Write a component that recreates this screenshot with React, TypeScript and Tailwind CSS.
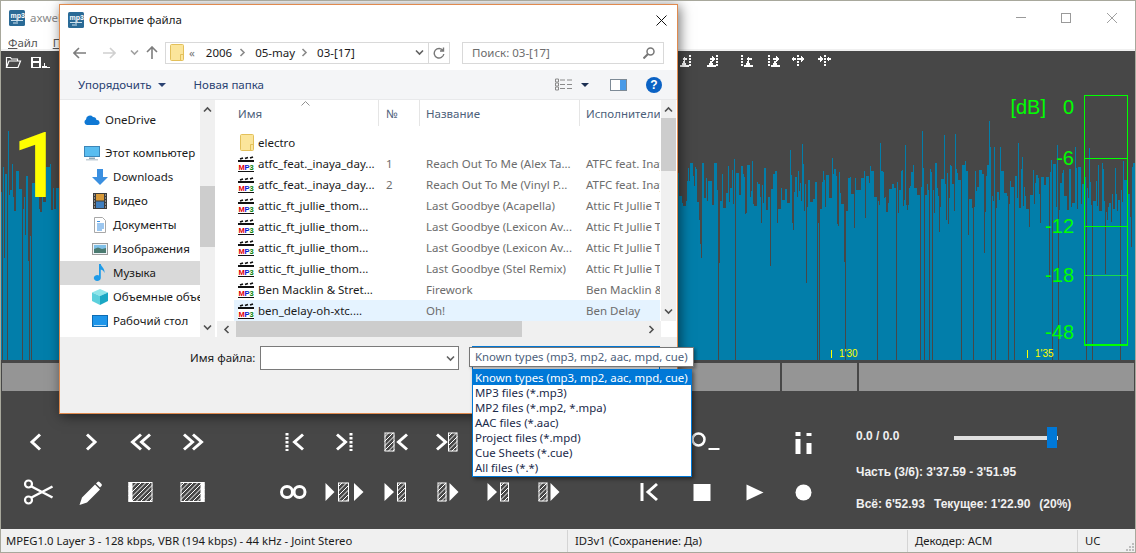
import type { ReactNode } from 'react';

// deterministic waveform so that every render gives the same picture
function buildWave() {
  let seed = 4711;
  const rnd = () => {
    seed = (seed * 1664525 + 1013904223) % 4294967296;
    return seed / 4294967296;
  };
  const blue: string[] = [];
  const H = 309;
  let x = 0;
  while (x < 1136) {
    let w = rnd() < 0.5 ? 1 : rnd() < 0.6 ? 2 : 3;
    let top = 112 + rnd() * 50;
    const k = rnd();
    if (k < 0.16) {
      top -= rnd() * 50;
      w = 1;
    } else if (k < 0.3) {
      top = 150 + rnd() * rnd() * 105;
      w = 1;
    }
    blue.push(`M${x} ${top.toFixed(0)}h${w}V${H}h-${w}z`);
    x += w;
    if (rnd() < 0.06) x += 1;
  }
  return blue.join('');
}
const wavePath = buildWave();

const files = [
  { name: 'atfc_feat._inaya_day...', n: '1', title: 'Reach Out To Me (Alex Ta...', artist: 'ATFC feat. Inaya' },
  { name: 'atfc_feat._inaya_day...', n: '2', title: 'Reach Out To Me (Vinyl P...', artist: 'ATFC feat. Inaya' },
  { name: 'attic_ft_jullie_thom...', n: '', title: 'Last Goodbye (Acapella)', artist: 'Attic Ft Jullie Th' },
  { name: 'attic_ft_jullie_thom...', n: '', title: 'Last Goodbye (Lexicon Av...', artist: 'Attic Ft Jullie Th' },
  { name: 'attic_ft_jullie_thom...', n: '', title: 'Last Goodbye (Lexicon Av...', artist: 'Attic Ft Jullie Th' },
  { name: 'attic_ft_jullie_thom...', n: '', title: 'Last Goodbye (Stel Remix)', artist: 'Attic Ft Jullie Th' },
  { name: 'Ben Macklin & Stret...', n: '', title: 'Firework', artist: 'Ben Macklin & St' },
  { name: 'ben_delay-oh-xtc....', n: '', title: 'Oh!', artist: 'Ben Delay' },
];

const fileTypes = [
  'Known types (mp3, mp2, aac, mpd, cue)',
  'MP3 files (*.mp3)',
  'MP2 files (*.mp2, *.mpa)',
  'AAC files (*.aac)',
  'Project files (*.mpd)',
  'Cue Sheets (*.cue)',
  'All files (*.*)',
];

function Logo() {
  return (
    <svg width="16" height="16" viewBox="0 0 16 16" className="shrink-0">
      <rect width="16" height="16" rx="1.5" fill="#2a6a96" />
      <text x="1.5" y="7.5" fontSize="7" fontWeight="bold" fill="#fff" fontFamily="Liberation Sans">mp3</text>
      <path d="M2 10.5h12M8 8v6M4 13h3" stroke="#cfe2ee" strokeWidth="1" fill="none" />
    </svg>
  );
}

function Mp3Icon() {
  return (
    <svg width="16" height="16" viewBox="0 0 16 16" className="shrink-0">
      <rect x="0" y="6" width="16" height="9" fill="#fff" />
      <path d="M0 4h16v2H0zM0 15h16v1H0z" fill="#111" />
      <path d="M2 3l3-1M7 2.500l3-1M12 2l3-1" stroke="#111" strokeWidth="1.800" />
      <text x="0.500" y="13.500" fontSize="7.500" fontWeight="bold" fill="#e00000" fontFamily="Liberation Sans">M</text>
      <text x="6.500" y="13.500" fontSize="7.500" fontWeight="bold" fill="#0020d0" fontFamily="Liberation Sans">P</text>
      <text x="11.500" y="13.500" fontSize="7.500" fontWeight="bold" fill="#008000" fontFamily="Liberation Sans">3</text>
    </svg>
  );
}

function FolderIcon({ w = 14, h = 17 }: { w?: number; h?: number }) {
  return (
    <svg width={w} height={h} viewBox="0 0 14 17" className="shrink-0">
      <path d="M0.5 1.5a1 1 0 0 1 1-1h11a1 1 0 0 1 1 1v14a1 1 0 0 1-1 1h-11a1 1 0 0 1-1-1z" fill="#fbe59b" stroke="#e3c05a" />
      <path d="M13.5 10.5h-3v6" fill="none" stroke="#e3c05a" />
    </svg>
  );
}

function Chevron({ dir, color = '#606060', size = 9 }: { dir: 'up' | 'down' | 'left' | 'right'; color?: string; size?: number }) {
  const d = { up: 'M1 6.5l3.5-3.5 3.5 3.5', down: 'M1 2.5l3.5 3.5 3.5-3.5', left: 'M6.5 1L3 4.5 6.5 8', right: 'M2.5 1L6 4.5 2.5 8' }[dir];
  return (
    <svg width={size} height={size} viewBox="0 0 9 9" className="shrink-0">
      <path d={d} fill="none" stroke={color} strokeWidth="1.6" />
    </svg>
  );
}

function NavIcon({ kind }: { kind: string }) {
  switch (kind) {
    case 'cloud':
      return (
        <svg width="16" height="16" viewBox="0 0 16 16" className="shrink-0">
          <path d="M3 13a3 3 0 0 1-1-5.600A4 4 0 0 1 9 5a3.500 3.500 0 0 1 3.500 3A2.500 2.500 0 0 1 13.500 13z" fill="#0f78d4" />
        </svg>
      );
    case 'pc':
      return (
        <svg width="16" height="16" viewBox="0 0 16 16" className="shrink-0">
          <rect x="0.5" y="1.500" width="15" height="10" fill="#59bdf0" stroke="#3c86b8" />
          <path d="M5 12.500h6v1.500H5z" fill="#8fa9b8" />
          <path d="M2 14h12v1.500H2z" fill="#c2ced6" />
        </svg>
      );
    case 'down':
      return (
        <svg width="16" height="16" viewBox="0 0 16 16" className="shrink-0">
          <path d="M5 0h6v8h5l-8 8-8-8h5z" fill="#3a8fe0" />
        </svg>
      );
    case 'video':
      return (
        <svg width="16" height="16" viewBox="0 0 16 16" className="shrink-0">
          <rect x="1" width="14" height="16" fill="#3c3c3c" />
          <rect x="4" y="1" width="8" height="6.500" fill="#d89a3a" />
          <rect x="4" y="8.500" width="8" height="6.500" fill="#3f7fc0" />
          <path d="M2 2h1M2 5h1M2 8h1M2 11h1M2 14h1M13 2h1M13 5h1M13 8h1M13 11h1M13 14h1" stroke="#ddd" />
        </svg>
      );
    case 'docs':
      return (
        <svg width="16" height="16" viewBox="0 0 16 16" className="shrink-0">
          <path d="M2.500 0.500h8l3 3v12h-11z" fill="#fff" stroke="#a8a8a8" />
          <path d="M5 4.500h3M5 7h7M5 9h7M5 11h7M5 13h5" stroke="#3a8fe0" />
        </svg>
      );
    case 'images':
      return (
        <svg width="16" height="16" viewBox="0 0 16 16" className="shrink-0">
          <rect x="0.500" y="2.500" width="15" height="11" fill="#eef3f6" stroke="#9a9a9a" />
          <rect x="2" y="4" width="12" height="4" fill="#7fc0e8" />
          <path d="M2 8l4-1.500 4 1.500 4-1v5H2z" fill="#4a7a70" />
        </svg>
      );
    case 'music':
      return (
        <svg width="16" height="18" viewBox="0 0 16 18" className="shrink-0">
          <path d="M7 0h1.800c.3 3 4.200 4 3.700 9-.6-2-2.200-3.200-3.700-3.500V14a3.500 3 0 1 1-1.800-2.600z" fill="#1e9be8" />
        </svg>
      );
    case 'cube':
      return (
        <svg width="16" height="16" viewBox="0 0 16 16" className="shrink-0">
          <path d="M8 0l8 3.500-8 3.500-8-3.500z" fill="#8fe6ea" />
          <path d="M0 3.500l8 3.500v9l-8-4z" fill="#5cd0dc" />
          <path d="M16 3.500l-8 3.500v9l8-4z" fill="#1aa7c4" />
        </svg>
      );
    default:
      return (
        <svg width="16" height="16" viewBox="0 0 16 16" className="shrink-0">
          <rect x="0.500" y="2.500" width="15" height="11" fill="#1e96ea" stroke="#0d6cb4" />
          <path d="M2 12h12v1H2z" fill="#bfe2f8" />
        </svg>
      );
  }
}

const Ctl = ({ children }: { children?: ReactNode }) => (
  <svg width="40" height="32" viewBox="0 0 40 32" fill="none">{children}</svg>
);

// hatched block used by the selection and jump buttons
function Hatch({ x, w, y = 6.5, h = 19, solid }: { x: number; w: number; y?: number; h?: number; solid?: 'l' | 'r' }) {
  const clip = `h${x}-${w}-${y}-${h}`.replace(/\./g, '_');
  const lines = [];
  for (let i = -h; i < w + h; i += 4.5) lines.push(`M${x + i} ${y + h}L${x + i + h} ${y}`);
  return (
    <g>
      <clipPath id={clip}>
        <rect x={x} y={y} width={w} height={h} />
      </clipPath>
      <path d={lines.join('')} stroke="#fff" strokeWidth="1" clipPath={`url(#${clip})`} />
      <rect x={x + 0.5} y={y + 0.5} width={w - 1} height={h - 1} stroke="#fff" strokeWidth="1" />
      {solid === 'l' && <rect x={x} y={y} width={4} height={h} fill="#fff" />}
      {solid === 'r' && <rect x={x + w - 4} y={y} width={4} height={h} fill="#fff" />}
    </g>
  );
}

const chev = (x1: number, x2: number, y1 = 8.500, y2 = 23.500) => (
  <path d={`M${x1} ${y1}L${x2} ${(y1 + y2) / 2}L${x1} ${y2}`} stroke="#fff" strokeWidth="3" />
);
const tri = (x1: number, x2: number) => <path d={`M${x1} 7L${x2} 16L${x1} 25z`} fill="#fff" />;
const dotted = (x: number) => <path d={`M${x} 7V25`} stroke="#fff" strokeWidth="3" strokeDasharray="2.500 1.500" />;

const controls: ReactNode[] = [
  // row one
  <Ctl key="a1">{chev(21, 13)}</Ctl>,
  <Ctl key="a2">{chev(17, 25)}</Ctl>,
  <Ctl key="a3">{chev(20, 11.500)}{chev(29, 20.500)}</Ctl>,
  <Ctl key="a4">{chev(12, 20.500)}{chev(21, 29.500)}</Ctl>,
  <Ctl key="a5" />,
  <Ctl key="a6">{dotted(13)}{chev(29, 20.500)}</Ctl>,
  <Ctl key="a7">{chev(12, 20.500)}{dotted(26)}</Ctl>,
  <Ctl key="a8"><Hatch x={8.500} w={10} />{chev(31, 22.500)}</Ctl>,
  <Ctl key="a9">{chev(10, 18.500)}<Hatch x={21} w={9.500} /></Ctl>,
  <Ctl key="a10" />,
  <Ctl key="a11" />,
  <Ctl key="a12" />,
  <Ctl key="a13" />,
  <Ctl key="a14">
    <circle cx="16.500" cy="13.500" r="6" stroke="#fff" strokeWidth="2.500" />
    <rect x="26.500" y="22" width="11" height="2" fill="#fff" />
  </Ctl>,
  <Ctl key="a15" />,
  <Ctl key="a16">
    <path d="M11.500 6h5v4h-5zM11.500 13h5v15h-5zM22.500 7h5v3h-5zM22.500 17h5v11h-5z" fill="#fff" />
  </Ctl>,
  // row two
  <Ctl key="b1">
    <circle cx="9.500" cy="8" r="3.500" stroke="#fff" strokeWidth="2.200" />
    <circle cx="9.500" cy="24" r="3.500" stroke="#fff" strokeWidth="2.200" />
    <path d="M12.500 10.500L33.500 21.500M12.500 21.500L33.500 10.500" stroke="#fff" strokeWidth="2.500" />
  </Ctl>,
  <Ctl key="b2">
    <path d="M9.500 29l2.500-7.500L25 8.500l5 5L17 26.500zM26 7.500l1.500-1.500a1.500 1.500 0 0 1 2 0l2 2a1.500 1.500 0 0 1 0 2L30 11.500z" fill="#fff" />
  </Ctl>,
  <Ctl key="b3"><Hatch x={7.500} w={24} y={6} h={20} solid="l" /></Ctl>,
  <Ctl key="b4"><Hatch x={8.500} w={24} y={6} h={20} solid="r" /></Ctl>,
  <Ctl key="b5" />,
  <Ctl key="b6">
    <circle cx="13" cy="16" r="5.500" stroke="#fff" strokeWidth="3" />
    <circle cx="25.500" cy="16" r="5.500" stroke="#fff" strokeWidth="3" />
  </Ctl>,
  <Ctl key="b7">{tri(0.500, 9.500)}<Hatch x={13} w={11} />{tri(29, 38.500)}</Ctl>,
  <Ctl key="b8">{tri(8.500, 18)}<Hatch x={21} w={9} /></Ctl>,
  <Ctl key="b9"><Hatch x={10.500} w={9} />{tri(22.500, 31.500)}</Ctl>,
  <Ctl key="b10">{tri(9.500, 19)}<Hatch x={22} w={9} /></Ctl>,
  <Ctl key="b11"><Hatch x={9.500} w={9} />{tri(21.500, 30.500)}</Ctl>,
  <Ctl key="b12" />,
  <Ctl key="b13">
    <rect x="9.500" y="7" width="3" height="18" fill="#fff" />
    {chev(26, 17, 8, 24)}
  </Ctl>,
  <Ctl key="b14"><rect x="11.500" y="8" width="17" height="17" fill="#fff" /></Ctl>,
  <Ctl key="b15"><path d="M13.500 8.500L30.500 16.500L13.500 24.500z" fill="#fff" /></Ctl>,
  <Ctl key="b16"><circle cx="19.500" cy="16.500" r="8" fill="#fff" /></Ctl>,
];

// tiny toolbar glyphs over the waveform
function Tiny({ wave, arrow, dots }: { wave?: number; arrow: string; dots: number[] }) {
  return (
    <svg width="15" height="14" viewBox="0 0 15 14" className="shrink-0" shapeRendering="crispEdges">
      {wave !== undefined && <path d={`M${wave} 13v-2h2v-2h1v-2h2v2h1v2h3v2z`} fill="#fff" />}
      <path d={arrow} fill="#fff" />
      {dots.map(x => (
        <path key={x} d={`M${x} 1V13`} stroke="#fff" strokeWidth="2" strokeDasharray="2 1" />
      ))}
    </svg>
  );
}

function Toolbar() {
  return (
    <div className="absolute top-[3px] left-[4px] flex items-start h-[16px]">
      <svg width="17" height="14" viewBox="0 0 17 14" className="shrink-0 mt-[1px]" fill="none">
        <path d="M1.500 12.500V2.500h4l1 1.500h6v2M1.500 12.500l2.500-6.500h11.500l-2.500 6.500z" stroke="#fff" strokeWidth="1.200" />
      </svg>
      <svg width="20" height="14" viewBox="0 0 20 14" className="shrink-0 ml-[8px] mt-[1px]" shapeRendering="crispEdges">
        <path d="M1 2h10v11H1z M3 3v3h6V3z M3 8v4h6V8z" fill="#fff" fillRule="evenodd" />
        <path d="M12 13v-2h2v-3h1v3h2v1h3v1z" fill="#fff" />
      </svg>
      <div className="flex items-start ml-[630px]">
        <Tiny wave={0} arrow="M2 5l3-3v2h2v2H5v2z" dots={[10]} />
        <div className="w-[12px]" />
        <Tiny wave={0} arrow="M8 5L5 2v2H3v2h2v2z" dots={[10]} />
        <div className="w-[19px]" />
        <Tiny wave={3} arrow="M5 5l3-3v2h3v2H8v2z" dots={[1]} />
        <div className="w-[12px]" />
        <Tiny wave={3} arrow="M11 5L8 2v2H5v2h3v2z" dots={[1]} />
        <div className="w-[7px]" />
        <Tiny arrow="M1 5l3-3v2h2v2H4v2zM14 5l-3-3v2H9v2h2v2z" dots={[7.500]} />
        <div className="w-[12px]" />
        <Tiny arrow="M6 5L3 2v2H1v2h2v2zM9 5l3-3v2h2v2h-2v2z" dots={[7.500]} />
      </div>
    </div>
  );
}

function Waveform() {
  return (
    <div className="relative h-[309px] shrink-0 overflow-hidden">
      <svg width="1136" height="309" className="block">
        <path d={wavePath} fill="#027eaa" />
      </svg>
      <Toolbar />
      <div className="absolute left-[11px] top-[66px] font-['Roboto',sans-serif] font-medium text-[90px] leading-[100px] text-[#ffff00]">1</div>

      {/* level scale */}
      <div className="absolute right-[89px] top-[44px] font-['Liberation_Sans',sans-serif] text-[20px] leading-[24px] text-[#00ff00]">[dB]</div>
      <div className="absolute right-[61px] top-[44px] font-['Liberation_Sans',sans-serif] text-[20px] leading-[24px] text-[#00ff00]">0</div>
      <div className="absolute right-[61px] top-[95px] font-['Liberation_Sans',sans-serif] text-[20px] leading-[24px] text-[#00ff00]">-6</div>
      <div className="absolute right-[61px] top-[163px] font-['Liberation_Sans',sans-serif] text-[20px] leading-[24px] text-[#00ff00]">-12</div>
      <div className="absolute right-[61px] top-[212px] font-['Liberation_Sans',sans-serif] text-[20px] leading-[24px] text-[#00ff00]">-18</div>
      <div className="absolute right-[61px] top-[269px] font-['Liberation_Sans',sans-serif] text-[20px] leading-[24px] text-[#00ff00]">-48</div>
      <div className="absolute left-[1083px] top-[44px] w-[44px] h-[251px] border border-b-2 border-[#00ff00] flex flex-col">
        <div className="h-[62px] border-b border-[#00ff00] box-content" />
        <div className="h-[67px] border-b border-[#00ff00] box-content" />
        <div className="h-[48px] border-b border-[#19d94f] box-content" />
      </div>

      {/* time marks */}
      <div className="absolute left-[830px] top-[297px] flex items-center gap-[7px] font-['Liberation_Sans',sans-serif] text-[10px] leading-[12px] text-[#ffff00]">
        <span className="w-px h-[8px] bg-[#ffff00]" />
        <span>1'30</span>
      </div>
      <div className="absolute left-[1026px] top-[297px] flex items-center gap-[7px] font-['Liberation_Sans',sans-serif] text-[10px] leading-[12px] text-[#ffff00]">
        <span className="w-px h-[8px] bg-[#ffff00]" />
        <span>1'35</span>
      </div>
    </div>
  );
}

function Dialog() {
  return (
    <div className="absolute left-[58px] top-[3px] w-[619px] h-[410px] border border-[#e08a4e] bg-white flex flex-col shadow-[2px_2px_12px_rgba(0,0,0,0.55)] font-['Noto_Sans',sans-serif] text-[11.5px] text-[#1a1a1a]">
      {/* title */}
      <div className="h-[30px] shrink-0 flex items-center pl-[8px] pr-[10px]">
        <Logo />
        <span className="ml-[5px]">Открытие файла</span>
        <svg width="11" height="11" viewBox="0 0 11 11" className="ml-auto">
          <path d="M0.500 0.500l10 10M10.500 0.500l-10 10" stroke="#111" strokeWidth="1" />
        </svg>
      </div>

      {/* address row */}
      <div className="h-[35px] shrink-0 flex items-center pl-[13px]">
        <svg width="13" height="12" viewBox="0 0 13 12" fill="none" stroke="#7d7d7d" strokeWidth="1.600"><path d="M13 6H1.500M6 1L1 6l5 5" /></svg>
        <svg width="13" height="12" viewBox="0 0 13 12" fill="none" stroke="#d0d0d0" strokeWidth="1.600" className="ml-[17px]"><path d="M0 6h11.500M7 1l5 5-5 5" /></svg>
        <div className="ml-[14px]"><Chevron dir="down" color="#a0a0a0" size={9} /></div>
        <svg width="12" height="13" viewBox="0 0 12 13" fill="none" stroke="#7d7d7d" strokeWidth="1.600" className="ml-[7px]"><path d="M6 13V1.500M1 6l5-5 5 5" /></svg>
        <div className="ml-[7px] w-[285px] h-[22px] border border-[#d9d9d9] flex items-center pl-[4px]">
          <FolderIcon />
          <span className="ml-[5px] text-[#777]">«</span>
          <span className="ml-[11px]">2006</span>
          <div className="ml-[6px]"><Chevron dir="right" color="#8a8a8a" /></div>
          <span className="ml-[8px]">05-may</span>
          <div className="ml-[5px]"><Chevron dir="right" color="#8a8a8a" /></div>
          <span className="ml-[8px]">03-[17]</span>
          <div className="ml-auto flex items-center h-full">
            <Chevron dir="down" color="#606060" />
            <div className="ml-[4px] w-[21px] h-full border-l border-[#d9d9d9] flex items-center justify-center">
              <svg width="12" height="12" viewBox="0 0 12 12" fill="none" stroke="#777" strokeWidth="1.400"><path d="M10 3.500A4.800 4.800 0 1 0 10.800 7M10.500 0.500v3.500h-3.500" /></svg>
            </div>
          </div>
        </div>
        <div className="ml-[12px] w-[202px] h-[22px] border border-[#d9d9d9] flex items-center pl-[9px] pr-[8px] text-[#6d6d6d]">
          <span>Поиск: 03-[17]</span>
          <svg width="12" height="12" viewBox="0 0 12 12" fill="none" stroke="#777" strokeWidth="1.500" className="ml-auto"><circle cx="7.500" cy="4.500" r="3.500" /><path d="M5 7l-4.500 4.500" strokeWidth="2" /></svg>
        </div>
      </div>

      {/* command bar */}
      <div className="h-[30px] shrink-0 flex items-center bg-[#f4f5f7] border-b border-[#e8e9eb] pl-[18px] pr-[15px] text-[#2a4272]">
        <span>Упорядочить</span>
        <svg width="8" height="4" viewBox="0 0 8 4" className="ml-[6px]"><path d="M0 0h8L4 4z" fill="#2a4272" /></svg>
        <span className="ml-[28px]">Новая папка</span>
        <svg width="17" height="13" viewBox="0 0 17 13" className="ml-auto" fill="none" stroke="#8a8a8a"><path d="M0.500 1h3v3h-3zM0.500 5h3v3h-3zM0.500 9h3v3h-3zM5 2h5M12 2h5M5 6.500h5M12 6.500h5M5 10.500h5M12 10.500h5" /></svg>
        <svg width="8" height="4" viewBox="0 0 8 4" className="ml-[9px]"><path d="M0 0h8L4 4z" fill="#1b2f52" /></svg>
        <svg width="17" height="12" viewBox="0 0 17 12" className="ml-[21px]"><rect x="0.500" y="0.500" width="16" height="11" fill="#fff" stroke="#7d8a96" /><rect x="10" y="1" width="6" height="10" fill="#4a9be8" /></svg>
        <div className="ml-[19px] w-[16px] h-[16px] rounded-full bg-[#0b62c4] flex items-center justify-center text-white text-[12px] font-bold leading-none font-['Liberation_Sans',sans-serif]">?</div>
      </div>

      {/* browser */}
      <div className="h-[237px] shrink-0 flex bg-white">
        <div className="w-[140px] shrink-0 overflow-hidden pt-[8px]">
          <NavRow icon="cloud" label="OneDrive" indent={24} />
          <div className="h-[9px]" />
          <NavRow icon="pc" label="Этот компьютер" indent={24} />
          <NavRow icon="down" label="Downloads" indent={32} />
          <NavRow icon="video" label="Видео" indent={32} />
          <NavRow icon="docs" label="Документы" indent={32} />
          <NavRow icon="images" label="Изображения" indent={32} />
          <NavRow icon="music" label="Музыка" indent={32} active />
          <NavRow icon="cube" label="Объемные объекты" indent={32} />
          <NavRow icon="desk" label="Рабочий стол" indent={32} />
        </div>
        <div className="w-[15px] shrink-0 bg-[#f0f0f0] flex flex-col items-center pt-[5px]">
          <Chevron dir="up" color="#505050" />
          <div className="w-full h-[61px] bg-[#cdcdcd] mt-[72px]" />
          <div className="mt-[76px]"><Chevron dir="down" color="#505050" /></div>
        </div>
        <div className="w-[2px] shrink-0" />
        <div className="flex-1 flex flex-col min-w-0">
          <div className="h-[221px] flex">
            <div className="w-[444px] shrink-0 overflow-hidden pl-[17px]">
              <div className="h-[26px] grid grid-cols-[144px_41px_160px_81px] text-[#4c607a] relative">
                <div className="pl-[4px] flex items-center pt-[2px]">Имя</div>
                <div className="pl-[7px] flex items-center pt-[2px] border-l border-[#e5e5e5]">№</div>
                <div className="pl-[6px] flex items-center pt-[2px] border-l border-[#e5e5e5]">Название</div>
                <div className="pl-[6px] flex items-center pt-[2px] border-l border-[#e5e5e5] whitespace-nowrap overflow-hidden">Исполнители</div>
                <svg width="9" height="5" viewBox="0 0 9 5" fill="none" stroke="#909090" className="absolute left-[67px] top-[1px]"><path d="M0.500 4.500l4-4 4 4" /></svg>
              </div>
              <div className="h-[6px]" />
              <div className="h-[21px] flex items-center pl-[6px] w-[426px]">
                <FolderIcon />
                <span className="ml-[4px]">electro</span>
              </div>
              {files.map((f, i) => (
                <div key={i} className={`h-[21px] w-[426px] grid grid-cols-[144px_41px_160px_81px] items-center whitespace-nowrap ${i === 7 ? 'bg-[#e5f3ff]' : ''}`}>
                  <div className="pl-[4px] flex items-center gap-[4px] overflow-hidden"><Mp3Icon /><span>{f.name}</span></div>
                  <div className="pl-[8px] text-[#6d6d6d]">{f.n}</div>
                  <div className="pl-[7px] text-[#6d6d6d] overflow-hidden">{f.title}</div>
                  <div className="pl-[7px] text-[#6d6d6d] overflow-hidden">{f.artist}</div>
                </div>
              ))}
            </div>
            <div className="w-[15px] shrink-0 bg-[#f0f0f0] flex flex-col items-center pt-[5px]">
              <Chevron dir="up" color="#505050" />
              <div className="w-full h-[53px] bg-[#cdcdcd] mt-[4px]" />
              <div className="mt-[136px]"><Chevron dir="down" color="#505050" /></div>
            </div>
          </div>
          <div className="h-[16px] flex">
            <div className="w-[444px] shrink-0 bg-[#f0f0f0] flex items-center">
              <div className="w-[19px] flex justify-center"><Chevron dir="left" color="#505050" /></div>
              <div className="w-[286px] h-full bg-[#cdcdcd]" />
              <div className="ml-[125px]"><Chevron dir="right" color="#505050" /></div>
            </div>
          </div>
        </div>
      </div>

      {/* name and type */}
      <div className="flex-1 bg-[#f0f0f0] flex items-start pl-[130px] pt-[9px]">
        <div className="w-[70px] h-[24px] flex items-center">Имя файла:</div>
        <div className="w-[199px] h-[24px] bg-white border border-[#7a7a7a] flex items-center justify-end pr-[3px]">
          <Chevron dir="down" color="#606060" />
        </div>
        <div className="ml-[13px] w-[188px] h-[24px] bg-white border border-[#0078d7]" />
      </div>
    </div>
  );
}

function NavRow({ icon, label, indent, active }: { icon: string; label: string; indent: number; active?: boolean }) {
  return (
    <div
      className={`h-[24px] flex items-center whitespace-nowrap overflow-hidden ${active ? 'bg-[#d9d9d9]' : ''}`}
      style={{ paddingLeft: indent }}
    >
      <NavIcon kind={icon} />
      <span className="ml-[5px]">{label}</span>
    </div>
  );
}

function TypeDropdown() {
  return (
    <>
      <div className="absolute left-[468px] top-[346px] w-[225px] h-[20px] bg-white border border-[#767676] flex items-center pl-[5px] whitespace-nowrap shadow-[2px_2px_3px_rgba(0,0,0,0.35)] font-['Noto_Sans',sans-serif] text-[11.4px] text-[#4c607a]">
        {fileTypes[0]}
      </div>
      <div className="absolute left-[471px] top-[368px] w-[220px] h-[108px] bg-white border border-[#0078d7] shadow-[2px_2px_4px_rgba(0,0,0,0.45)] font-['Noto_Sans',sans-serif] text-[11.4px] text-[#1a2a4a]">
        {fileTypes.map((t, i) => (
          <div key={t} className={`h-[15px] leading-[15px] pl-[2px] whitespace-nowrap ${i === 0 ? 'bg-[#0078d7] text-white' : ''}`}>{t}</div>
        ))}
      </div>
    </>
  );
}

export default function App() {
  return (
    <div className="relative w-[1136px] h-[553px] overflow-hidden box-border border border-[#a8a89c] bg-[#474747] flex flex-col">
      {/* main window title and menu */}
      <div className="h-[50px] shrink-0 bg-white border-b-2 border-[#f0f0f0] flex flex-col font-['Noto_Sans',sans-serif] text-[11.5px]">
        <div className="h-[33px] shrink-0 flex items-center pl-[8px]">
          <Logo />
          <span className="ml-[5px] text-[#8a8a8a]">axwell</span>
          <div className="ml-auto flex items-center pr-[18px]">
            <div className="w-[10px] h-px bg-[#9a9a9a]" />
            <div className="ml-[35px] w-[10px] h-[10px] border border-[#9a9a9a]" />
            <svg width="10" height="10" viewBox="0 0 10 10" className="ml-[36px]"><path d="M0 0l10 10M10 0L0 10" stroke="#a0a0a0" /></svg>
          </div>
        </div>
        <div className="flex items-center pl-[7px] text-[#555]">
          <span><span className="underline">Ф</span>айл</span>
          <span className="ml-[15px]"><span className="underline">П</span>равка</span>
        </div>
      </div>

      <Waveform />

      {/* parts strip */}
      <div className="h-[31px] shrink-0 pt-[3px] pl-[1px] pr-[1px] flex gap-[2px]">
        <div className="w-[778px] bg-[#959595]" />
        <div className="w-[75px] bg-[#959595]" />
        <div className="flex-1 bg-[#959595]" />
      </div>

      {/* transport */}
      <div className="flex-1 flex pl-[12px] pt-[26px]">
        <div className="grid grid-cols-[repeat(16,51px)] grid-rows-[50px_50px] w-[816px] shrink-0">
          {controls.map((c, i) => (
            <div key={i} className="flex items-center justify-center">{c}</div>
          ))}
        </div>
        <div className="ml-[27px] flex-1 font-['Liberation_Sans',sans-serif] font-bold text-[12px] text-[#f0f0f0] mt-[9px]">
          <div className="h-[20px] flex items-center whitespace-nowrap">
            <span className="w-[98px]">0.0 / 0.0</span>
            <div className="relative w-[104px] h-[4px] bg-[#e0e0e0] mt-[3px]">
              <div className="absolute left-[93px] -top-[9px] w-[10px] h-[21px] bg-[#0078d7]" />
            </div>
          </div>
          <div className="mt-[16px] h-[20px] flex items-center whitespace-nowrap">Часть (3/6): 3'37.59 - 3'51.95</div>
          <div className="mt-[12px] h-[20px] flex items-center whitespace-nowrap">
            <span>Всё: 6'52.93</span>
            <span className="ml-[9px]">Текущее: 1'22.90</span>
            <span className="ml-[9px]">(20%)</span>
          </div>
        </div>
      </div>

      {/* status bar */}
      <div className="h-[23px] shrink-0 pt-[1px] bg-[#f0f0f0] flex items-center font-['Noto_Sans',sans-serif] text-[11.3px] text-[#1a1a1a] relative">
        <div className="w-[566px] pl-[5px] whitespace-nowrap">MPEG1.0 Layer 3 - 128 kbps, VBR (194 kbps) - 44 kHz - Joint Stereo</div>
        <div className="w-[340px] pl-[7px] border-l border-[#d4d4d4] h-full flex items-center">ID3v1 (Сохранение: Да)</div>
        <div className="w-[170px] pl-[7px] border-l border-[#d4d4d4] h-full flex items-center">Декодер: ACM</div>
        <div className="flex-1 pl-[7px] border-l border-[#d4d4d4] h-full flex items-center">UC</div>
        <svg width="10" height="10" viewBox="0 0 10 10" className="absolute right-[1px] bottom-[1px]"><path d="M8 2h2v2H8zM5 5h2v2H5zM8 5h2v2H8zM2 8h2v2H2zM5 8h2v2H5zM8 8h2v2H8z" fill="#bdbdbd" /></svg>
      </div>

      <Dialog />
      <TypeDropdown />
    </div>
  );
}
